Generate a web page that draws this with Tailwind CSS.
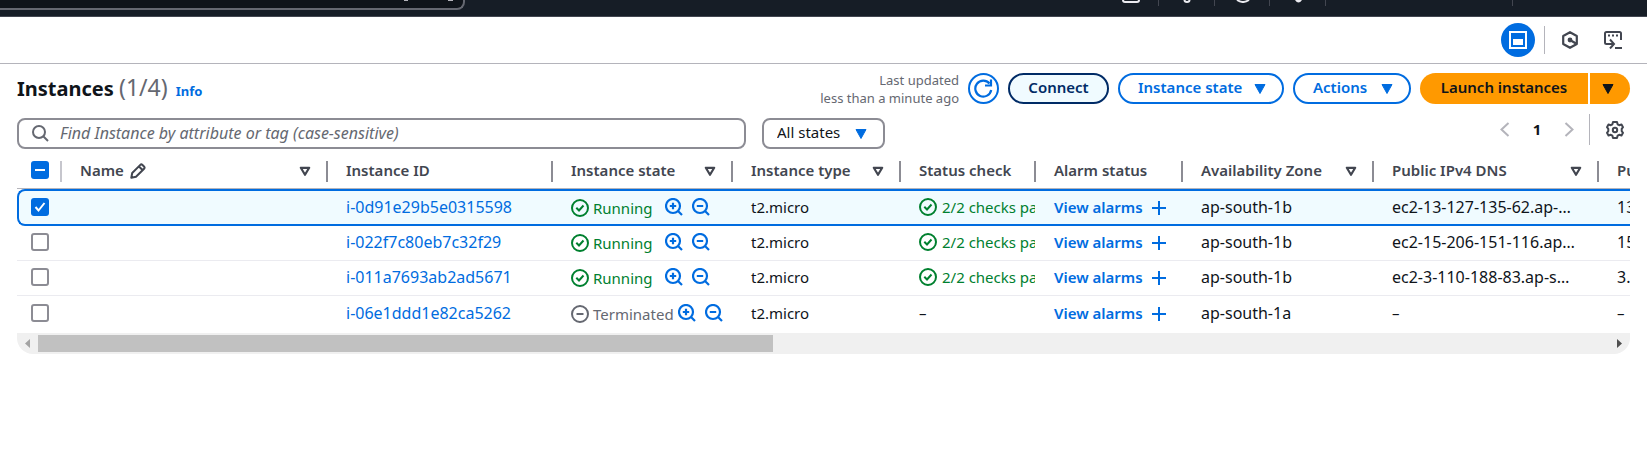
<!DOCTYPE html>
<html lang="en">
<head>
<meta charset="utf-8">
<title>Instances | EC2</title>
<script src="https://cdn.jsdelivr.net/npm/@tailwindcss/browser@4"></script>
</head>
<body class="bg-white font-['Noto_Sans','Open_Sans',sans-serif] text-[15px] leading-5 text-[#0f141a]">

<svg class="hidden" aria-hidden="true">
  <symbol id="sort" viewBox="0 0 12 11"><path d="M1.800 1.800h8.400L6 8.800z" fill="none" stroke="currentColor" stroke-width="2.200" stroke-linejoin="round"/></symbol>
  <symbol id="caret" viewBox="0 0 12 10"><path d="M1 .5h10L6 9.500z" fill="currentColor" stroke="currentColor" stroke-linejoin="round"/></symbol>
  <symbol id="ok" viewBox="0 0 18 18"><circle cx="9" cy="9" r="8" fill="none" stroke="currentColor" stroke-width="2"/><path d="M5.300 8.800l2.700 2.700 4.500-5" fill="none" stroke="currentColor" stroke-width="2"/></symbol>
  <symbol id="stop" viewBox="0 0 18 18"><circle cx="9" cy="9" r="8" fill="none" stroke="currentColor" stroke-width="2"/><path d="M5.500 9h7" stroke="currentColor" stroke-width="2"/></symbol>
  <symbol id="zin" viewBox="0 0 18 18"><circle cx="8" cy="8" r="7" fill="none" stroke="currentColor" stroke-width="2.200"/><path d="M13 13l4 4M4.800 8h6.400M8 4.800v6.400" fill="none" stroke="currentColor" stroke-width="2.200"/></symbol>
  <symbol id="zout" viewBox="0 0 18 18"><circle cx="8" cy="8" r="7" fill="none" stroke="currentColor" stroke-width="2.200"/><path d="M13 13l4 4M4.800 8h6.400" fill="none" stroke="currentColor" stroke-width="2.200"/></symbol>
  <symbol id="plus" viewBox="0 0 14 14"><path d="M7 0v14M0 7h14" stroke="currentColor" stroke-width="2"/></symbol>
</svg>

<header class="flex h-[17px] justify-between overflow-hidden border-b border-[#424650] bg-[#161d26]">
  <div class="-mt-6 flex h-[34px] w-[465px] items-end justify-end rounded-br-lg border-r-2 border-b-2 border-[#656871] bg-[#0f141a] pr-2.5">
    <svg class="mb-[7px] h-px w-[49px]" viewBox="0 0 49 1"><path d="M0 .5h4M44 .5h5" stroke="#b4b4bb"/></svg>
  </div>
  <div class="mr-[134px] flex h-1.5 items-start text-[#ebebf0]">
    <svg class="mr-[18px] h-[3px] w-[18px]" viewBox="0 0 18 3"><path d="M1 0q0 2 2 2h12q2 0 2-2" fill="none" stroke="currentColor" stroke-width="2"/></svg>
    <i class="mr-6 h-full w-px bg-[#424650]"></i>
    <svg class="mr-[23px] h-[3px] w-[8px]" viewBox="0 0 8 3"><path d="M1.500 0q0 2 2.500 2t2.500-2" fill="none" stroke="currentColor" stroke-width="2"/></svg>
    <i class="mr-[21px] h-full w-px bg-[#424650]"></i>
    <svg class="mr-[19px] h-[3px] w-[14px]" viewBox="0 0 14 3"><path d="M1 0q6 4 12 0" fill="none" stroke="currentColor" stroke-width="2"/></svg>
    <i class="mr-[25px] h-full w-px bg-[#424650]"></i>
    <svg class="mr-[23px] h-[3px] w-[7px]" viewBox="0 0 7 3"><path d="M0 0h7q-3.500 5-7 0z" fill="currentColor"/></svg>
    <i class="mr-[186px] h-full w-px bg-[#424650]"></i>
    <i class="h-full w-px bg-[#424650]"></i>
  </div>
</header>

<nav class="flex h-[47px] items-center justify-end border-b border-[#b4b4bb] pr-[25px] text-[#424650]" aria-label="Tools">
  <button class="grid size-[34px] place-items-center rounded-full bg-[#006ce0] text-white" aria-label="Split panel">
    <svg class="size-[18px]" viewBox="0 0 18 18"><path d="M1 1h16v16H1z" fill="none" stroke="currentColor" stroke-width="2"/><path d="M4 8h10v6H4z" fill="currentColor"/></svg>
  </button>
  <span class="mr-[17px] ml-[9px] h-7 w-px bg-[#b4b4bb]"></span>
  <button aria-label="Amazon Q">
    <svg class="h-[18px] w-4" viewBox="0 0 16 18"><path d="M8 1.200l6.800 3.800v8L8 16.800 1.200 13V5z" fill="none" stroke="currentColor" stroke-width="2.200" stroke-linejoin="round"/><circle cx="8" cy="9" r="2.400" fill="currentColor"/><path d="M8 9l6 3.500" stroke="currentColor" stroke-width="2.200"/></svg>
  </button>
  <button class="ml-[26px]" aria-label="CloudShell">
    <svg class="h-[18px] w-[18px]" viewBox="0 0 18 18"><path d="M5 13H2.500Q1 13 1 11.500V2.500Q1 1 2.500 1h13Q17 1 17 2.500V9" fill="none" stroke="currentColor" stroke-width="2"/><path d="M4 4.500h10" stroke="currentColor" stroke-width="2" stroke-dasharray="2 2"/><path d="M3 13h6M6 8.500l4 4.500-4 4.500M11 17h7" fill="none" stroke="currentColor" stroke-width="2"/></svg>
  </button>
</nav>

<main class="px-[17px] pt-[9px]">
  <div class="flex h-[31px] items-center">
    <h1 class="pb-0.5 text-[20px] leading-7 font-bold">Instances <span class="text-[23px] font-normal text-[#656871]">(1/4)</span></h1>
    <a href="#" class="mt-1 ml-2 text-[13px] font-bold text-[#006ce0]">Info</a>
    <p class="mr-[9px] ml-auto text-right text-[13px] leading-[18px] text-[#656871]">Last updated<br>less than a minute ago</p>
    <button class="mr-[9px] grid size-[31px] place-items-center rounded-full border-2 border-[#006ce0] text-[#006ce0]" aria-label="Refresh">
      <svg class="size-[19px]" viewBox="0 0 19 19"><path d="M17.200 11A8 8 0 1 1 15.500 4.500" fill="none" stroke="currentColor" stroke-width="2.200"/><path d="M17 .5V6.500H11" fill="none" stroke="currentColor" stroke-width="2.200"/></svg>
    </button>
    <button class="mr-[9px] h-[31px] w-[101px] rounded-full border-2 border-[#002b66] bg-[#f0fbff] pb-1 font-semibold text-[#002b66]">Connect</button>
    <button class="mr-[9px] flex h-[31px] w-[166px] items-center justify-between rounded-full border-2 border-[#006ce0] pr-4 pb-1 pl-[18px] font-semibold text-[#006ce0]">Instance state<svg class="mt-1 h-[10px] w-3"><use href="#caret"/></svg></button>
    <button class="mr-[9px] flex h-[31px] w-[118px] items-center justify-between rounded-full border-2 border-[#006ce0] pr-4 pb-1 pl-[18px] font-semibold text-[#006ce0]">Actions<svg class="mt-1 h-[10px] w-3"><use href="#caret"/></svg></button>
    <button class="mr-0.5 h-[31px] w-[168px] rounded-l-full bg-[#ff9900] pb-1 font-semibold">Launch instances</button>
    <button class="grid h-[31px] w-10 place-items-center rounded-r-full bg-[#ff9900] pr-1" aria-label="More launch options"><svg class="h-[10px] w-3"><use href="#caret"/></svg></button>
  </div>

  <div class="mt-[14px] flex items-start">
    <label class="flex h-[31px] w-[729px] items-center rounded-lg border-2 border-[#8c8c94] pl-[13px] text-[#656871]">
      <svg class="size-[17px] shrink-0" viewBox="0 0 17 17"><circle cx="7" cy="7" r="6" fill="none" stroke="currentColor" stroke-width="2"/><path d="M11 11l5 5" stroke="currentColor" stroke-width="2"/></svg>
      <input type="text" aria-label="Find Instance" placeholder="Find Instance by attribute or tag (case-sensitive)" class="ml-[11px] w-full pb-0.5 text-base leading-5 outline-none placeholder:text-[#656871] placeholder:italic">
    </label>
    <div class="ml-4 grid items-center text-[#006ce0]">
      <select aria-label="Instance state filter" class="col-start-1 row-start-1 h-[31px] w-[123px] appearance-none rounded-lg border-2 border-[#8c8c94] pb-1 pl-[13px] text-[#0f141a]"><option>All states</option></select>
      <svg class="pointer-events-none col-start-1 row-start-1 mr-[18px] h-[10px] w-3 justify-self-end"><use href="#caret"/></svg>
    </div>
    <div class="-mt-1 mr-1.5 ml-auto flex h-[31px] items-center">
      <button class="text-[#b4b4bb]" aria-label="Previous page"><svg class="h-[15px] w-[10px]" viewBox="0 0 10 15"><path d="M8.500 1l-7 6.500 7 6.500" fill="none" stroke="currentColor" stroke-width="2"/></svg></button>
      <button class="mx-5 w-[14px] pb-0.5 font-bold" aria-current="page">1</button>
      <button class="text-[#b4b4bb]" aria-label="Next page"><svg class="h-[15px] w-[10px]" viewBox="0 0 10 15"><path d="M1.500 1l7 6.500-7 6.500" fill="none" stroke="currentColor" stroke-width="2"/></svg></button>
      <span class="mr-4 ml-[15px] h-full w-px bg-[#b4b4bb]"></span>
      <button class="text-[#424650]" aria-label="Preferences"><svg class="size-[18px]" viewBox="0 0 18 18"><path d="M7 1h4l.6 2.300 1.600.9 2.300-.7 1.500 2.700-1.300 1.700v2.200L17 11.800l-1.500 2.700-2.300-.7-1.600.9L11 17H7l-.6-2.300-1.600-.9-2.300.7L1 11.800l1.300-1.700V7.900L1 6.200l1.500-2.700 2.300.7 1.600-.9z" fill="none" stroke="currentColor" stroke-width="2" stroke-linejoin="round"/><circle cx="9" cy="9" r="2.200" fill="none" stroke="currentColor" stroke-width="2"/></svg></button>
    </div>
  </div>

  <div class="mt-[5px] overflow-hidden rounded-b-2xl">
    <table class="w-[1732px] table-fixed border-separate border-spacing-0 text-left whitespace-nowrap [&_td]:overflow-hidden [&_td]:p-0 [&_td]:pb-0.5 [&_td+td]:pl-[18px] [&_th]:h-[35px] [&_th]:border-b [&_th]:border-[#b4b4bb] [&_th]:p-0 [&_th]:font-semibold [&_th]:text-[#424650] [&_th>div]:pb-0.5">
      <colgroup><col class="w-[45px]"><col class="w-[266px]"><col class="w-[225px]"><col class="w-[180px]"><col class="w-[168px]"><col class="w-[135px]"><col class="w-[147px]"><col class="w-[191px]"><col class="w-[225px]"><col class="w-[150px]"></colgroup>
      <thead>
        <tr>
          <th><div class="flex h-[21px] items-center border-r-2 border-[#c6c6cd] pl-[14px]"><span class="grid size-[18px] place-items-center"><input type="checkbox" checked aria-label="Select all" class="col-start-1 row-start-1 size-[18px] appearance-none rounded-[3px] bg-[#006ce0]"><svg class="pointer-events-none col-start-1 row-start-1 h-0.5 w-[10px] bg-white"></svg></span></div></th>
          <th><div class="flex h-[21px] items-center border-r-2 border-[#8c8c94] pr-[15px] pl-[18px]">Name<svg class="mt-0.5 ml-1.5 size-4" viewBox="0 0 16 16"><path d="M1.300 14.700l.9-4.700 8.100-8.100q1-1 2.200.1l1.500 1.500q1.100 1.200.1 2.200L6 13.800zM9 3.500L12.500 7" fill="none" stroke="currentColor" stroke-width="2" stroke-linejoin="round"/></svg><svg class="mt-0.5 ml-auto h-[11px] w-3"><use href="#sort"/></svg></div></th>
          <th><div class="flex h-[21px] items-center border-r-2 border-[#8c8c94] pl-[18px]">Instance ID</div></th>
          <th><div class="flex h-[21px] items-center justify-between border-r-2 border-[#8c8c94] pr-[15px] pl-[18px]">Instance state<svg class="mt-0.5 h-[11px] w-3"><use href="#sort"/></svg></div></th>
          <th><div class="flex h-[21px] items-center justify-between border-r-2 border-[#8c8c94] pr-[15px] pl-[18px]">Instance type<svg class="mt-0.5 h-[11px] w-3"><use href="#sort"/></svg></div></th>
          <th><div class="flex h-[21px] items-center border-r-2 border-[#8c8c94] pl-[18px]">Status check</div></th>
          <th><div class="flex h-[21px] items-center border-r-2 border-[#8c8c94] pl-[18px]">Alarm status</div></th>
          <th><div class="flex h-[21px] items-center justify-between border-r-2 border-[#8c8c94] pr-[15px] pl-[18px]">Availability Zone<svg class="mt-0.5 h-[11px] w-3"><use href="#sort"/></svg></div></th>
          <th><div class="flex h-[21px] items-center justify-between border-r-2 border-[#8c8c94] pr-[15px] pl-[18px]">Public IPv4 DNS<svg class="mt-0.5 h-[11px] w-3"><use href="#sort"/></svg></div></th>
          <th><div class="pl-[18px]">Public IPv4</div></th>
        </tr>
      </thead>
      <tbody>
        <tr class="[&>td]:h-[37px] [&>td]:border-y-2 [&>td]:border-[#006ce0] [&>td]:bg-[#f0fbff]">
          <td class="rounded-l-lg border-l-2"><span class="ml-3 grid size-[18px] place-items-center"><input type="checkbox" checked aria-label="Select i-0d91e29b5e0315598" class="col-start-1 row-start-1 size-[18px] appearance-none rounded-[3px] bg-[#006ce0]"><svg class="pointer-events-none col-start-1 row-start-1 size-3 text-white" viewBox="0 0 12 12"><path d="M1.500 6l3 3.500L10.500 2" fill="none" stroke="currentColor" stroke-width="2"/></svg></span></td>
          <td></td>
          <td><a href="#" class="text-base leading-5 text-[#006ce0]">i-0d91e29b5e0315598</a></td>
          <td><div class="flex items-center pt-0.5 text-[#00802f]"><svg class="mr-1 size-[18px]"><use href="#ok"/></svg>Running<button class="ml-3 pb-0.5 text-[#006ce0]" aria-label="Filter in"><svg class="size-[18px]"><use href="#zin"/></svg></button><button class="ml-[9px] pb-0.5 text-[#006ce0]" aria-label="Filter out"><svg class="size-[18px]"><use href="#zout"/></svg></button></div></td>
          <td>t2.micro</td>
          <td><div class="mr-px flex items-center overflow-hidden text-[#00802f]"><svg class="mr-[5px] size-[18px] shrink-0"><use href="#ok"/></svg>2/2 checks passed</div></td>
          <td><a href="#" class="flex items-center font-semibold text-[#006ce0]">View alarms<svg class="mt-0.5 ml-[9px] size-[14px]"><use href="#plus"/></svg></a></td>
          <td class="text-base leading-5">ap-south-1b</td>
          <td><div class="mr-[22px] truncate text-base leading-5">ec2-13-127-135-62.ap-south-1.compute.amazonaws.com</div></td>
          <td class="text-base leading-5">13.127.135.62</td>
        </tr>
        <tr class="[&>td]:h-[35px] [&>td]:border-b [&>td]:border-[#ebebf0]">
          <td><input type="checkbox" aria-label="Select i-022f7c80eb7c32f29" class="ml-[14px] block size-[18px] appearance-none rounded-[3px] border-2 border-[#8c8c94]"></td>
          <td></td>
          <td><a href="#" class="text-base leading-5 text-[#006ce0]">i-022f7c80eb7c32f29</a></td>
          <td><div class="flex items-center pt-0.5 text-[#00802f]"><svg class="mr-1 size-[18px]"><use href="#ok"/></svg>Running<button class="ml-3 pb-0.5 text-[#006ce0]" aria-label="Filter in"><svg class="size-[18px]"><use href="#zin"/></svg></button><button class="ml-[9px] pb-0.5 text-[#006ce0]" aria-label="Filter out"><svg class="size-[18px]"><use href="#zout"/></svg></button></div></td>
          <td>t2.micro</td>
          <td><div class="mr-px flex items-center overflow-hidden text-[#00802f]"><svg class="mr-[5px] size-[18px] shrink-0"><use href="#ok"/></svg>2/2 checks passed</div></td>
          <td><a href="#" class="flex items-center font-semibold text-[#006ce0]">View alarms<svg class="mt-0.5 ml-[9px] size-[14px]"><use href="#plus"/></svg></a></td>
          <td class="text-base leading-5">ap-south-1b</td>
          <td><div class="mr-[22px] truncate text-base leading-5">ec2-15-206-151-116.ap-south-1.compute.amazonaws.com</div></td>
          <td class="text-base leading-5">15.206.151.116</td>
        </tr>
        <tr class="[&>td]:h-[35px] [&>td]:border-b [&>td]:border-[#ebebf0]">
          <td><input type="checkbox" aria-label="Select i-011a7693ab2ad5671" class="ml-[14px] block size-[18px] appearance-none rounded-[3px] border-2 border-[#8c8c94]"></td>
          <td></td>
          <td><a href="#" class="text-base leading-5 text-[#006ce0]">i-011a7693ab2ad5671</a></td>
          <td><div class="flex items-center pt-0.5 text-[#00802f]"><svg class="mr-1 size-[18px]"><use href="#ok"/></svg>Running<button class="ml-3 pb-0.5 text-[#006ce0]" aria-label="Filter in"><svg class="size-[18px]"><use href="#zin"/></svg></button><button class="ml-[9px] pb-0.5 text-[#006ce0]" aria-label="Filter out"><svg class="size-[18px]"><use href="#zout"/></svg></button></div></td>
          <td>t2.micro</td>
          <td><div class="mr-px flex items-center overflow-hidden text-[#00802f]"><svg class="mr-[5px] size-[18px] shrink-0"><use href="#ok"/></svg>2/2 checks passed</div></td>
          <td><a href="#" class="flex items-center font-semibold text-[#006ce0]">View alarms<svg class="mt-0.5 ml-[9px] size-[14px]"><use href="#plus"/></svg></a></td>
          <td class="text-base leading-5">ap-south-1b</td>
          <td><div class="mr-[22px] truncate text-base leading-5">ec2-3-110-188-83.ap-south-1.compute.amazonaws.com</div></td>
          <td class="text-base leading-5">3.110.188.83</td>
        </tr>
        <tr class="[&>td]:h-[35px]">
          <td><input type="checkbox" aria-label="Select i-06e1ddd1e82ca5262" class="ml-[14px] block size-[18px] appearance-none rounded-[3px] border-2 border-[#8c8c94]"></td>
          <td></td>
          <td><a href="#" class="text-base leading-5 text-[#006ce0]">i-06e1ddd1e82ca5262</a></td>
          <td><div class="flex items-center pt-0.5 text-[#656871]"><svg class="mr-1 size-[18px]"><use href="#stop"/></svg>Terminated<button class="ml-1 pb-0.5 text-[#006ce0]" aria-label="Filter in"><svg class="size-[18px]"><use href="#zin"/></svg></button><button class="ml-[9px] pb-0.5 text-[#006ce0]" aria-label="Filter out"><svg class="size-[18px]"><use href="#zout"/></svg></button></div></td>
          <td>t2.micro</td>
          <td>–</td>
          <td><a href="#" class="flex items-center font-semibold text-[#006ce0]">View alarms<svg class="mt-0.5 ml-[9px] size-[14px]"><use href="#plus"/></svg></a></td>
          <td class="text-base leading-5">ap-south-1a</td>
          <td>–</td>
          <td>–</td>
        </tr>
      </tbody>
    </table>
    <div class="mt-0.5 flex h-[21px] items-center bg-[#f0f0f0] px-2">
      <svg class="h-[9px] w-[5px] text-[#a3a3a3]" viewBox="0 0 5 9"><path d="M5 0v9L0 4.500z" fill="currentColor"/></svg>
      <div class="mx-2 h-[17px] flex-1"><div class="h-full bg-[#c1c1c1]" style="width:46.8%"></div></div>
      <svg class="h-[9px] w-[5px] text-[#505050]" viewBox="0 0 5 9"><path d="M0 0v9l5-4.500z" fill="currentColor"/></svg>
    </div>
  </div>
</main>
</body>
</html>
